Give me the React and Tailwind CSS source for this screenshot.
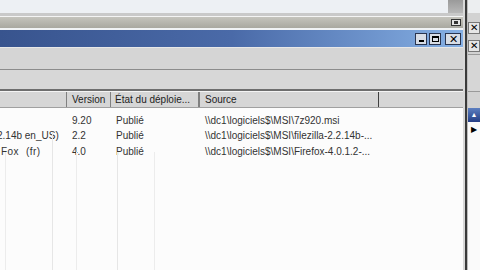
export default function App() {
  const rows = [
    { name: "", ver: "9.20", state: "Publié", src: "\\\\dc1\\logiciels$\\MSI\\7z920.msi", nc: "" },
    { name: "2.14b en_US)", ver: "2.2", state: "Publié", src: "\\\\dc1\\logiciels$\\MSI\\filezilla-2.2.14b-...", nc: "-ml-[3px]" },
    { name: "Fox (fr)", ver: "4.0", state: "Publié", src: "\\\\dc1\\logiciels$\\MSI\\Firefox-4.0.1.2-...", nc: "ml-[1px] tracking-[0.4px] [word-spacing:4px]" },
  ];
  return (
    <div className="w-[480px] h-[270px] overflow-hidden flex bg-[#eef1f5] text-[10px] leading-[12px]" style={{ fontFamily: "'Liberation Sans', Arial, sans-serif" }}>
      <div className="flex-1 flex flex-col min-w-0">
        <div className="h-[13px] bg-[#edf0f4] flex justify-end">
          <div className="w-[15px] h-full bg-gradient-to-b from-[#9a9a9a] to-[#b8b8b8]" />
        </div>
        <div className="h-[4px] bg-[#c9c9c9] border-b border-[#f4f4f4]" />
        <div className="h-[11px] bg-gradient-to-b from-[#c4c3bc] to-[#a9a8a0] flex justify-end items-center pr-[2px]">
          <div className="w-[10px] h-[7px] bg-[#e4e4e4] border border-[#333] flex items-center justify-center">
            <div className="w-[4px] h-[3px] bg-[#333]" />
          </div>
        </div>
        <div className="h-[2px] bg-[#f0f2f4]" />
        {/* title bar */}
        <div className="h-[17px] bg-gradient-to-r from-[#38548e] via-[#4a6aa8] to-[#86b0e4] flex items-center justify-end pr-[2px] gap-[2px]">
          <div className="w-[12px] h-[12px] bg-[#d8dde6] border border-[#2a3550] flex items-end justify-center pb-[2px]">
            <div className="w-[5px] h-[2px] bg-black" />
          </div>
          <div className="w-[12px] h-[12px] bg-[#d8dde6] border border-[#2a3550] flex items-center justify-center">
            <div className="w-[7px] h-[6px] border border-black border-t-2" />
          </div>
          <div className="w-[16px] h-[12px] ml-[2px] bg-[#d8dde6] border border-[#2a3550] flex items-center justify-center text-[11px] text-black">✕</div>
        </div>
        <div className="h-[1px] bg-[#e8e8e8]" />
        {/* toolbar */}
        <div className="h-[22px] bg-[#d5d5d5] border-b border-[#8c8c8c]" />
        <div className="h-[21px] bg-[#d7d7d7] border-b-2 border-[#6e6e6e]" />
        <div className="h-[1px] bg-[#f4f4f4]" />
        {/* list */}
        <div className="flex-1 bg-[#fcfcfc] flex flex-col relative">
          <div className="h-[16px] bg-[#d6d6d6] border-b border-[#a0a0a0] flex items-center text-[#222]">
            <div className="w-[67px] h-full border-r border-[#808080]" />
            <div className="w-[44px] h-full border-r border-[#808080] flex items-center pl-[5px]">Version</div>
            <div className="w-[89px] h-full border-r-2 border-[#808080] flex items-center pl-[4px] whitespace-nowrap overflow-hidden">État du déploie...</div>
            <div className="w-[179px] h-full border-r border-[#404040] flex items-center pl-[5px]">Source</div>
            <div className="flex-1" />
          </div>
          <div className="flex flex-col pt-[5px] text-[#333]">
            {rows.map((r, i) => (
              <div key={i} className="h-[15.5px] flex items-center whitespace-nowrap">
                <div className="w-[67px] overflow-hidden"><span className={"inline-block " + r.nc}>{r.name}</span></div>
                <div className="w-[44px] pl-[5px]">{r.ver}</div>
                <div className="w-[89px] pl-[5px]">{r.state}</div>
                <div className="pl-[5px]">{r.src}</div>
              </div>
            ))}
          </div>
          {/* faint artifact lines */}
          <div className="absolute left-[5px] top-[60px] bottom-0 w-px bg-[#ececec]" />
          <div className="absolute left-[52px] top-[40px] bottom-0 w-px bg-[#e6e6e6]" />
          <div className="absolute left-[76px] top-[60px] bottom-0 w-px bg-[#ececec]" />
          <div className="absolute left-[117px] top-[60px] bottom-0 w-px bg-[#e6e6e6]" />
          <div className="absolute left-[154px] top-[60px] bottom-0 w-px bg-[#ececec]" />
        </div>
      </div>
      {/* window right border */}
      <div className="w-[5px] flex">
        <div className="w-[2px] bg-[#d8d8d8]" />
        <div className="w-[2px] bg-[#3a3a3a]" />
        <div className="w-[1px] bg-[#bdbdbd]" />
      </div>
      {/* right strip: other window */}
      <div className="w-[12px] bg-[#d2d2d2] flex flex-col">
        <div className="h-[13px] bg-[#eceef0]" />
        <div className="h-[12px] mt-[9px] bg-[#e6e6e6] border border-[#777] flex items-center justify-center text-[10px]">✕</div>
        <div className="h-[12px] mt-[6px] bg-[#e6e6e6] border border-[#777] flex items-center justify-center text-[10px]">✕</div>
        <div className="h-[38px] mt-[2px] bg-[#d6d6d6] border-y border-[#9a9a9a]" />
        <div className="h-[14px] mt-[16px] bg-gradient-to-b from-[#5d7fc0] to-[#243e86] flex items-center justify-center text-white text-[7px]">▲</div>
        <div className="flex-1 bg-[#fafafa] pt-[2px] pl-[3px] text-[8px] text-black">▶</div>
      </div>
    </div>
  );
}
